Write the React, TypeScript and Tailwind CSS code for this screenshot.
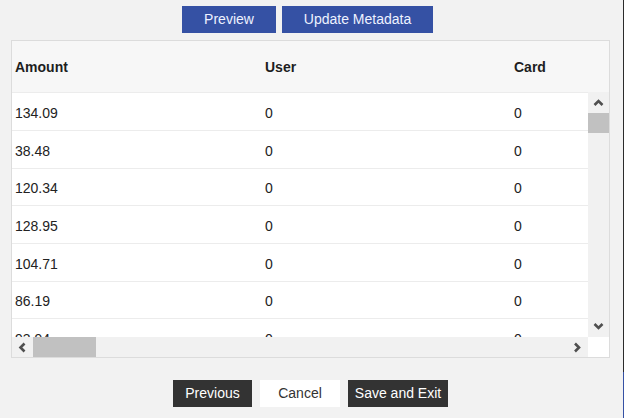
import React from "react";

const rows = ["134.09", "38.48", "120.34", "128.95", "104.71", "86.19", "93.94"];
const heights = [38, 38, 37, 38, 38, 37, 38];

function Chevron({ dir }: { dir: "up" | "down" | "left" | "right" }) {
  const pts: Record<string, string> = {
    up: "1.5,7 5.5,3 9.5,7",
    down: "1.5,2 5.5,6 9.5,2",
    left: "6.5,1.5 2.5,5.5 6.5,9.5",
    right: "2,1.5 6,5.5 2,9.5",
  };
  const vertical = dir === "up" || dir === "down";
  return (
    <svg width={vertical ? 11 : 9} height={vertical ? 9 : 11} viewBox={vertical ? "0 0 11 9" : "0 0 9 11"}>
      <polyline points={pts[dir]} fill="none" stroke="#4f4f4f" strokeWidth="2.6" />
    </svg>
  );
}

export default function App() {
  return (
    <div
      className="flex h-[418px] w-[624px] overflow-hidden bg-[#f2f2f2] text-[14px]"
      style={{ fontFamily: '"Liberation Sans", Arial, sans-serif' }}
    >
      <div className="flex w-[623px] flex-col">
        <div className="flex gap-[6px] pl-[182px] pt-[6px]">
          <button className="flex h-[27px] w-[94px] items-center justify-center bg-[#3551a4] text-[#eef2ff]">
            Preview
          </button>
          <button className="flex h-[27px] w-[151px] items-center justify-center bg-[#3551a4] text-[#eef2ff]">
            Update Metadata
          </button>
        </div>

        <div className="ml-[11px] mt-[7px] flex h-[318px] w-[599px] flex-col border border-[#dcdcdc] bg-white">
          <div className="flex h-[51px] shrink-0 items-center bg-[#f7f7f7] pt-[2px] font-bold text-[#1e1e1e]">
            <div className="w-[250px] pl-[3px]">Amount</div>
            <div className="w-[249px] pl-[3px]">User</div>
            <div className="pl-[3px]">Card</div>
          </div>
          <div className="flex h-[245px] shrink-0">
            <div className="w-[576px] overflow-hidden">
              {rows.map((r, i) => (
                <div
                  key={r}
                  className="flex items-center border-t border-[#ececec] pt-[3px] text-[#222]"
                  style={{ height: heights[i] }}
                >
                  <div className="w-[250px] shrink-0 pl-[3px]">{r}</div>
                  <div className="w-[249px] shrink-0 pl-[3px]">0</div>
                  <div className="shrink-0 pl-[3px]">0</div>
                </div>
              ))}
            </div>
            <div className="flex w-[21px] flex-col bg-[#f1f1f1]">
              <div className="flex h-[21px] items-center justify-center">
                <Chevron dir="up" />
              </div>
              <div className="h-[20px] bg-[#c1c1c1]" />
              <div className="flex-1" />
              <div className="flex h-[21px] items-center justify-center">
                <Chevron dir="down" />
              </div>
            </div>
          </div>
          <div className="flex h-[20px] shrink-0">
            <div className="flex w-[576px] items-center bg-[#f1f1f1]">
              <div className="flex h-full w-[21px] items-center justify-center">
                <Chevron dir="left" />
              </div>
              <div className="h-full w-[63px] bg-[#c1c1c1]" />
              <div className="flex-1" />
              <div className="flex h-full w-[21px] items-center justify-center">
                <Chevron dir="right" />
              </div>
            </div>
            <div className="w-[21px] bg-white" />
          </div>
        </div>

        <div className="mt-[22px] flex gap-[8px] pl-[173px]">
          <button className="flex h-[27px] w-[79px] items-center justify-center bg-[#333333] text-white">
            Previous
          </button>
          <button className="flex h-[27px] w-[80px] items-center justify-center bg-white text-[#333]">
            Cancel
          </button>
          <button className="flex h-[27px] w-[100px] items-center justify-center bg-[#333333] text-white">
            Save and Exit
          </button>
        </div>
      </div>
      <div className="flex w-px flex-col">
        <div className="h-[372px] bg-[#2b2b2b]" />
        <div className="flex-1 bg-[#3551a4]" />
      </div>
    </div>
  );
}
